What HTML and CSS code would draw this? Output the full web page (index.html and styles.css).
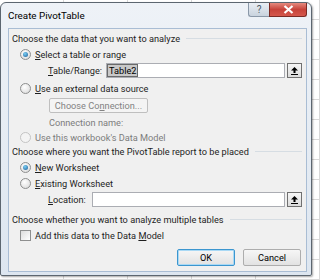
FILE: index.html
```html
<!DOCTYPE html>
<html lang="en">
<head>
  <meta charset="UTF-8">
  <title>Create PivotTable</title>
  <link rel="stylesheet" href="styles.css">
</head>
<body>
  <div class="window">
    <div class="titlebar">
      <span class="title">Create PivotTable</span>
      <div class="controls">
        <span class="btn-help">?</span>
        <span class="btn-close">
          <svg width="11" height="9" viewBox="0 0 11 9"><path d="M1.5 1 L9.5 8 M9.5 1 L1.5 8" stroke="#fff" stroke-width="2.2"/></svg>
        </span>
      </div>
    </div>

    <div class="client">
      <div class="section">
        <span>Choose the data that you want to analyze</span>
        <span class="rule"></span>
      </div>

      <div class="option">
        <span class="radio checked"></span>
        <span><u>S</u>elect a table or range</span>
      </div>
      <div class="field">
        <span class="label"><u>T</u>able/Range:</span>
        <span class="input input-range"><span class="selected">Table2</span></span>
        <span class="pick"><svg width="9" height="9" viewBox="0 0 9 9"><path d="M4.5 1 L1 4.5 H3.5 V7 H5.5 V4.5 H8 Z" fill="#000"/><path d="M1 8.5 H8" stroke="#000" stroke-width="1"/></svg></span>
      </div>

      <div class="option gap2">
        <span class="radio"></span>
        <span><u>U</u>se an external data source</span>
      </div>
      <div class="sub conn-row">
        <span class="push disabled">Choose Co<u>n</u>nection...</span>
      </div>
      <div class="sub conn-name muted">Connection name:</div>
      <div class="option small muted">
        <span class="radio off"></span>
        <span>Use this workbook's Data Model</span>
      </div>

      <div class="section tight">
        <span>Choose where you want the PivotTable report to be placed</span>
        <span class="rule"></span>
      </div>
      <div class="option">
        <span class="radio checked"></span>
        <span><u>N</u>ew Worksheet</span>
      </div>
      <div class="option">
        <span class="radio"></span>
        <span><u>E</u>xisting Worksheet</span>
      </div>
      <div class="field">
        <span class="label"><u>L</u>ocation:</span>
        <span class="input input-loc"></span>
        <span class="pick"><svg width="9" height="9" viewBox="0 0 9 9"><path d="M4.5 1 L1 4.5 H3.5 V7 H5.5 V4.5 H8 Z" fill="#000"/><path d="M1 8.5 H8" stroke="#000" stroke-width="1"/></svg></span>
      </div>

      <div class="section gap4">
        <span>Choose whether you want to analyze multiple tables</span>
        <span class="rule"></span>
      </div>
      <div class="option">
        <span class="check"></span>
        <span>Add this data to the Data <u>M</u>odel</span>
      </div>

      <div class="actions">
        <span class="push ok">OK</span>
        <span class="push">Cancel</span>
      </div>
    </div>
  </div>
</body>
</html>
```

FILE: styles.css
```css
body {
  margin: 0;
  width: 320px;
  height: 280px;
  overflow: hidden;
  background-color: #fff;
  background-image:
    repeating-linear-gradient(to bottom, transparent 0, transparent 19px, #d8d8d8 19px, #d8d8d8 20px),
    repeating-linear-gradient(to right, transparent 0, transparent 63px, #d8d8d8 63px, #d8d8d8 64px);
  font-family: Roboto, "Noto Sans", sans-serif;
  font-size: 9.2px;
  color: #1e1e1e;
}

.window {
  margin-top: 2px;
  width: 312px;
  height: 274px;
  box-sizing: border-box;
  border: 1px solid #5c6670;
  border-radius: 6px 6px 2px 2px;
  background: linear-gradient(to bottom, #eef2f7, #dde6f0);
  padding: 0 4px 4px 7px;
  box-shadow: 1px 1px 2px rgba(0, 0, 0, 0.35);
}

.titlebar {
  height: 25px;
  display: flex;
  align-items: flex-start;
  justify-content: space-between;
}

.title {
  margin-top: 7px;
  font-size: 9.8px;
  color: #000;
}

.controls {
  display: flex;
}

.btn-help {
  width: 21px;
  height: 14px;
  box-sizing: border-box;
  border: 1px solid #8a98a8;
  border-right: none;
  border-top: none;
  border-radius: 0 0 0 3px;
  background: linear-gradient(to bottom, #e9eef4, #c9d3de);
  color: #4b5866;
  font-size: 10px;
  line-height: 13px;
  text-align: center;
}

.btn-close {
  width: 38px;
  height: 14px;
  box-sizing: border-box;
  border: 1px solid #7a2a24;
  border-top: none;
  border-radius: 0 0 3px 0;
  background: linear-gradient(to bottom, #e58a7e, #c7433a 50%, #d4574c);
  display: flex;
  align-items: center;
  justify-content: center;
}

.client {
  height: 244px;
  box-sizing: border-box;
  background: #f0f0f0;
  border: 1px solid #a9bdd4;
  padding: 1px 4px 0 3px;
}

.section {
  height: 16px;
  display: flex;
  align-items: center;
  white-space: nowrap;
}

.section.tight {
  height: 15px;
}

.rule {
  flex: 1;
  margin-left: 6px;
  border-top: 1px solid #d6dde3;
}

.option {
  height: 16px;
  display: flex;
  align-items: center;
  padding-left: 8px;
  gap: 4px;
  white-space: nowrap;
}

.option.small {
  height: 14px;
}

.gap2 {
  margin-top: 2px;
}

.gap4 {
  margin-top: 4px;
}

.muted {
  color: #7d7d7d;
}

.radio {
  width: 11px;
  height: 11px;
  box-sizing: border-box;
  border-radius: 50%;
  border: 1px solid #8e8f8f;
  background: radial-gradient(circle at 40% 35%, #ffffff, #d6d6d6);
  position: relative;
}

.radio.checked::after {
  content: "";
  position: absolute;
  left: 2px;
  top: 2px;
  width: 5px;
  height: 5px;
  border-radius: 50%;
  background: radial-gradient(circle at 40% 35%, #7ad0f5, #1c5a95);
}

.radio.off {
  border-color: #c4c4c4;
  background: #f4f4f4;
}

.check {
  width: 11px;
  height: 11px;
  box-sizing: border-box;
  border: 1px solid #8e8f8f;
  background: linear-gradient(135deg, #dcdcdc, #ffffff);
}

.field {
  height: 16px;
  display: flex;
  align-items: center;
  padding-left: 36px;
}

.label {
  white-space: nowrap;
}

.input {
  height: 15px;
  box-sizing: border-box;
  border: 1px solid #abadb3;
  background: #fff;
  display: flex;
  align-items: center;
  padding-left: 1px;
}

.input-range {
  margin-left: 4px;
  width: 180px;
}

.input-loc {
  margin-left: 6px;
  width: 195px;
}

.selected {
  background: #c8c8c8;
  color: #000;
  padding: 0 1px;
  line-height: 11px;
  outline: 1px solid #6a6a6a;
}

.pick {
  margin-left: 2px;
  width: 15px;
  height: 15px;
  box-sizing: border-box;
  border: 1px solid #707070;
  background: linear-gradient(to bottom, #f6f6f6, #dcdcdc);
  display: flex;
  align-items: center;
  justify-content: center;
}

.sub {
  padding-left: 37px;
  display: flex;
  align-items: center;
  white-space: nowrap;
}

.conn-row {
  height: 16px;
  margin: 1px 0 2px;
}

.conn-name {
  height: 15px;
}

.push {
  width: 58px;
  height: 17px;
  box-sizing: border-box;
  border: 1px solid #adadad;
  border-radius: 2px;
  background: linear-gradient(to bottom, #f6f6f6, #e2e2e2);
  display: flex;
  align-items: center;
  justify-content: center;
  color: #000;
  white-space: nowrap;
}

.push.disabled {
  width: 99px;
  height: 15px;
  border-color: #bfbfbf;
  background: #f4f4f4;
  color: #838383;
}

.push.ok {
  border-color: #3c96cf;
  box-shadow: inset 0 0 0 1px #a9d9f5;
}

.actions {
  margin-top: 6px;
  display: flex;
  justify-content: flex-end;
  gap: 8px;
  padding-right: 1px;
}
```
